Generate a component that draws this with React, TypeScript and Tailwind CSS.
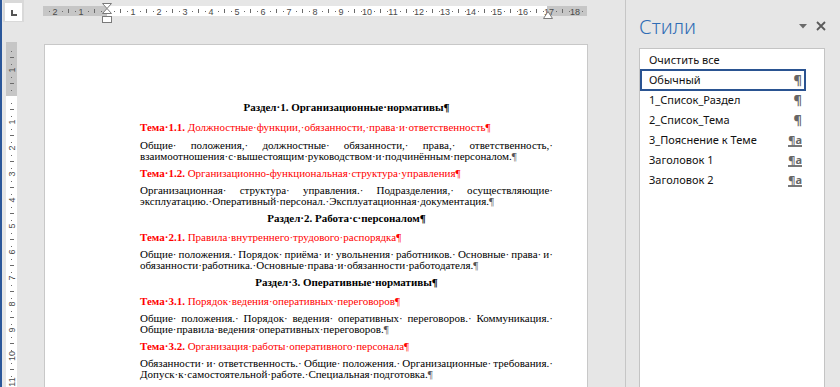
const serif = { fontFamily: '"Liberation Serif", "Times New Roman", serif' };
const sans = { fontFamily: '"Noto Sans", "Open Sans", sans-serif' };

// horizontal ruler: 26px per cm, zero at x=64
const hSteps = Array.from({ length: 23 }, (_, i) => i - 3);

function HRuler() {
  return (
    <div className="relative w-[544px] h-[10px] mt-[6px]">
      <svg width="544" height="10" className="block">
        <rect x="0" y="0" width="64" height="10" fill="#c6c6c6" />
        <rect x="64" y="0" width="440" height="10" fill="#ffffff" />
        <rect x="504" y="0" width="40" height="10" fill="#c6c6c6" />
        {hSteps.map((k) => {
          const base = 64 + 26 * k;
          return (
            <g key={k}>
              {[6.5, 19.5].map((d) =>
                base + d > 0 && base + d < 544 ? (
                  <rect key={d} x={Math.round(base + d)} y="5" width="1" height="1" fill="#6b6b6b" />
                ) : null
              )}
              {base + 13 > 0 && base + 13 < 544 ? (
                <rect x={base + 13} y="3" width="1" height="4" fill="#6b6b6b" />
              ) : null}
              {k !== 0 && base > 4 && base < 540 ? (
                <text
                  x={base}
                  y="8.5"
                  fontSize="9"
                  textAnchor="middle"
                  fill="#4a4a4a"
                  fontFamily="Liberation Sans, Arial, sans-serif"
                >
                  {Math.abs(k)}
                </text>
              ) : null}
            </g>
          );
        })}
      </svg>
      {/* indent markers */}
      <svg width="12" height="26" className="absolute left-[58px] -top-[4px]">
        <path d="M1.5 1.5 H10.5 L6 6.5 Z" fill="#fff" stroke="#7a7a7a" />
        <path d="M6 6.5 L10.5 11.5 H1.5 Z" fill="#fff" stroke="#7a7a7a" />
        <rect x="1.5" y="14.5" width="9" height="6" fill="#fff" stroke="#7a7a7a" />
      </svg>
      <svg width="12" height="10" className="absolute left-[499px] top-[4px]">
        <path d="M1.5 8.5 L6 1.5 L10.5 8.5 Z" fill="#fff" stroke="#7a7a7a" />
      </svg>
    </div>
  );
}

// vertical ruler: zero at y=54
const vSteps = Array.from({ length: 16 }, (_, i) => i - 3);

function VRuler() {
  return (
    <svg width="11" height="345" className="block ml-[4px]">
      <rect x="0" y="0" width="11" height="54" fill="#c6c6c6" />
      <rect x="0" y="54" width="11" height="300" fill="#ffffff" />
      {vSteps.map((k) => {
        const base = 54 + 26 * k;
        return (
          <g key={k}>
            {[6.5, 19.5].map((d) =>
              base + d > 0 ? (
                <rect key={d} x="5" y={Math.round(base + d)} width="1" height="1" fill="#6b6b6b" />
              ) : null
            )}
            {base + 13 > 0 ? <rect x="4" y={base + 13} width="4" height="1" fill="#6b6b6b" /> : null}
            {k !== 0 && base > 3 ? (
              <text
                x="0"
                y="0"
                fontSize="9"
                textAnchor="middle"
                fill="#4a4a4a"
                fontFamily="Liberation Sans, Arial, sans-serif"
                transform={`translate(8.5 ${base}) rotate(-90)`}
              >
                {Math.abs(k)}
              </text>
            ) : null}
          </g>
        );
      })}
    </svg>
  );
}

function Razdel({ text, first }: { text: string; first?: boolean }) {
  return (
    <div className={`text-center font-bold ${first ? "mb-[9px]" : "mt-[1px] mb-[8px]"}`}>{text}</div>
  );
}

function Tema({ num, text, first }: { num: string; text: string; first?: boolean }) {
  return (
    <div className={`text-[#ff0000] ${first ? "mb-[7px]" : "mb-[6px]"}`}>
      <span className="font-bold">{num}</span> {text}
    </div>
  );
}

function Body({ first, last }: { first: string; last: string }) {
  return (
    <div className="mb-[6px]">
      <div className="flex justify-between">
        {first.split(" ").map((w, i) => (
          <span key={i}>{w}</span>
        ))}
      </div>
      <div>
        {last.replace(/¶$/, "")}
        <span className="text-[#555]">¶</span>
      </div>
    </div>
  );
}

const styles = [
  { name: "Очистить все", icon: "" },
  { name: "Обычный", icon: "p", selected: true },
  { name: "1_Список_Раздел", icon: "p" },
  { name: "2_Список_Тема", icon: "p" },
  { name: "3_Пояснение к Теме", icon: "pa" },
  { name: "Заголовок 1", icon: "pa" },
  { name: "Заголовок 2", icon: "pa" },
];

export default function App() {
  return (
    <div className="w-[840px] h-[387px] overflow-hidden flex bg-[#e6e6e6]">
      <div className="w-[2px] bg-[#2b579a]" />

      {/* document area */}
      <div className="w-[623px] flex flex-col min-h-0 overflow-hidden">
        <div className="h-[42px] shrink-0 flex">
          <div className="w-[41px]">
            <div className="ml-[1px] w-[21px] h-[22px] bg-[#d9d9d9] pl-[2px] pt-[3px]">
              <div className="w-[17px] h-[18px] bg-white flex items-center justify-center">
                <div className="w-[6px] h-[6px] border-l-2 border-b-2 border-[#555] mt-[2px]" />
              </div>
            </div>
          </div>
          <HRuler />
        </div>
        <div className="flex flex-1 min-h-0">
          <div className="w-[42px]">
            <VRuler />
          </div>
          <div
            className="w-[544px] mt-[2px] h-[400px] shrink-0 bg-white border border-b-0 border-[#c8c8c8] pt-[57px] pl-[95px] pr-[34px] text-[11px] leading-[11px] text-black"
            style={serif}
          >
            <Razdel first text="Раздел·1. Организационные·нормативы¶" />
            <Tema first num="Тема·1.1." text="Должностные·функции,·обязанности,·права·и·ответственность¶" />
            <Body
              first="Общие· положения,· должностные· обязанности,· права,· ответственность,·"
              last="взаимоотношения·с·вышестоящим·руководством·и·подчинённым·персоналом.¶"
            />
            <Tema num="Тема·1.2." text="Организационно-функциональная·структура·управления¶" />
            <Body
              first="Организационная· структура· управления.· Подразделения,· осуществляющие·"
              last="эксплуатацию.·Оперативный·персонал.·Эксплуатационная·документация.¶"
            />
            <Razdel text="Раздел·2. Работа·с·персоналом¶" />
            <Tema num="Тема·2.1." text="Правила·внутреннего·трудового·распорядка¶" />
            <Body
              first="Общие· положения.· Порядок· приёма· и· увольнения· работников.· Основные· права· и·"
              last="обязанности·работника.·Основные·права·и·обязанности·работодателя.¶"
            />
            <Razdel text="Раздел·3. Оперативные·нормативы¶" />
            <Tema num="Тема·3.1." text="Порядок·ведения·оперативных·переговоров¶" />
            <Body
              first="Общие· положения.· Порядок· ведения· оперативных· переговоров.· Коммуникация.·"
              last="Общие·правила·ведения·оперативных·переговоров.¶"
            />
            <Tema num="Тема·3.2." text="Организация·работы·оперативного·персонала¶" />
            <Body
              first="Обязанности· и· ответственность.· Общие· положения.· Организационные· требования.·"
              last="Допуск·к·самостоятельной·работе.·Специальная·подготовка.¶"
            />
          </div>
        </div>
      </div>

      <div className="w-px bg-[#c6c6c6]" />

      {/* styles pane */}
      <div className="flex-1 flex flex-col" style={sans}>
        <div className="h-[48px] shrink-0 flex items-start pl-[13px] pr-[14px]">
          <div className="text-[20px] leading-none mt-[17px] text-[#2f6db5] font-light">Стили</div>
          <div className="ml-auto mt-[21px] flex items-center gap-[9px]">
            <svg width="8" height="5" viewBox="0 0 8 5">
              <path d="M0 0 H8 L4 4.5 Z" fill="#6a6a6a" />
            </svg>
            <svg width="10" height="10" viewBox="0 0 10 10">
              <path d="M1 1 L9 9 M9 1 L1 9" stroke="#5a5a5a" strokeWidth="1.8" />
            </svg>
          </div>
        </div>
        <div className="ml-[13px] w-[186px] flex-1 bg-white border border-b-0 border-[#c4c4c4] pt-[1px]">
          {styles.map((s) => (
            <div
              key={s.name}
              className={`w-[166px] flex items-center text-[11px] text-[#111] ${
                s.selected
                  ? "h-[22px] -mt-[1px] -mb-[1px] border-2 border-[#2a5391] pl-[7px] pr-[2px]"
                  : "h-[20px] pl-[9px] pr-[4px]"
              }`}
            >
              <span>{s.name}</span>
              {s.icon === "p" ? (
                <span className="ml-auto font-bold text-[13px] leading-none text-[#666]">¶</span>
              ) : null}
              {s.icon === "pa" ? (
                <span className="ml-auto font-bold text-[11px] leading-[11px] text-[#666] border-b-2 border-[#777]">
                  ¶a
                </span>
              ) : null}
            </div>
          ))}
        </div>
      </div>
    </div>
  );
}
